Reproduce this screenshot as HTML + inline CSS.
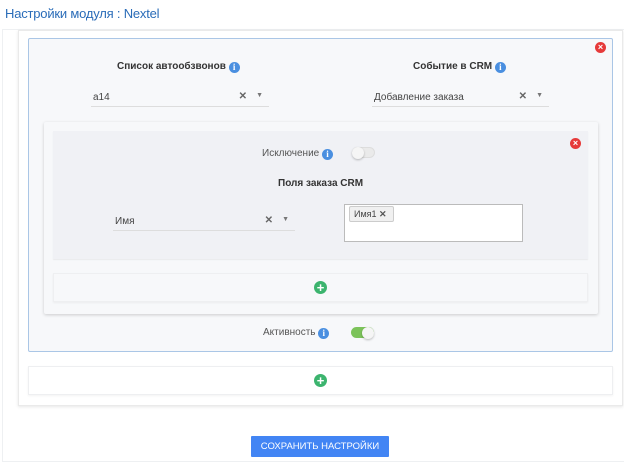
<!DOCTYPE html>
<html><head><meta charset="utf-8"><style>
*{box-sizing:border-box;margin:0;padding:0}
html,body{width:624px;height:463px;overflow:hidden}
body{background:#fff;font-family:"Liberation Sans","Noto Sans CJK SC",sans-serif;position:relative;color:#555}
.a{position:absolute}
.t{left:5px;top:6px;font-size:13px;color:#2a6cb8;letter-spacing:-0.2px}
.outer{left:2px;top:29px;width:640px;height:433px;border:1px solid #eef0f2}
.cont{left:18px;top:30px;width:605px;height:376px;background:#fff;border:1px solid #eaeaea;box-shadow:0 1px 3px rgba(0,0,0,.1)}
.blue{left:28px;top:38px;width:585px;height:314px;background:#f7f8fa;border:1px solid #aac6e6;border-radius:2px}
.lbl{font-size:10px;font-weight:bold;color:#333;white-space:nowrap}
.info{display:inline-block;width:11px;height:11px;border-radius:50%;background:#4a8fe0;color:#fff;font-size:9px;font-weight:bold;text-align:center;line-height:11px;vertical-align:-1px;font-family:"Liberation Serif",serif}
.sel{height:16px;border-bottom:1px solid #ddd;font-size:10px;color:#444;padding-left:2px}
.sel .x{position:absolute;right:22px;top:0;font-size:10px;color:#666;font-weight:bold}
.sel .c{position:absolute;right:6px;top:1px;font-size:7px;color:#777}
.redx{width:11px;height:11px;border-radius:50%;background:#e63a3a;color:#fff;font-size:9px;font-weight:bold;line-height:11px;text-align:center}
.card{left:44px;top:122px;width:554px;height:192px;background:#f7f8fa;box-shadow:0 1px 3px rgba(0,0,0,.18);border-radius:2px}
.grey{left:53px;top:131px;width:535px;height:128px;background:#f0f1f5;box-shadow:0 1px 1px rgba(0,0,0,.06)}
.addb{background:#f7f8fa;border:1px solid #eeeff1;box-shadow:0 1px 2px rgba(0,0,0,.05)}
.plus{width:13px;height:13px;border-radius:50%;background:#3cb46e;color:#fff;font-size:13px;font-weight:bold;line-height:13px;text-align:center}
.tog{width:23px;height:11px;border-radius:6px;background:#eaeaea;border:1px solid #ddd}
.tog i{position:absolute;top:-1px;width:12px;height:12px;border-radius:50%;background:#f5f5f5;box-shadow:0 1px 2px rgba(0,0,0,.25)}
.txt{font-size:10px;color:#555}
</style></head><body>
<div class="a t">Настройки модуля : Nextel</div>
<div class="a outer"></div>
<div class="a cont"></div>
<div class="a blue"></div>
<div class="a redx" style="left:595px;top:42px">×</div>
<div class="a lbl" style="left:117px;top:61px">Список автообзвонов <span class="info">i</span></div>
<div class="a lbl" style="left:413px;top:61px">Событие в CRM <span class="info">i</span></div>
<div class="a sel" style="left:91px;top:91px;width:178px;padding-top:1px">a14<span class="x">✕</span><span class="c">▼</span></div>
<div class="a sel" style="left:372px;top:91px;width:177px;padding-top:1px">Добавление заказа<span class="x">✕</span><span class="c">▼</span></div>
<div class="a card"></div>
<div class="a grey"></div>
<div class="a redx" style="left:570px;top:138px">×</div>
<div class="a txt" style="left:262px;top:148px">Исключение <span class="info">i</span></div>
<div class="a tog" style="left:352px;top:147px"><i style="left:-1px"></i></div>
<div class="a lbl" style="left:278px;top:178px">Поля заказа CRM</div>
<div class="a sel" style="left:113px;top:215px;width:182px;padding-top:1px">Имя<span class="x">✕</span><span class="c">▼</span></div>
<div class="a" style="left:344px;top:204px;width:179px;height:38px;background:#fff;border:1px solid #bbb"></div>
<div class="a" style="left:349px;top:206px;width:45px;height:16px;background:#f0f0f0;border:1px solid #ccc;border-radius:2px;font-size:9px;color:#444;padding:2px 0 0 4px">Имя1 <b style="font-size:9px;color:#555">✕</b></div>
<div class="a addb" style="left:53px;top:273px;width:535px;height:29px"></div>
<div class="a plus" style="left:314px;top:281px">+</div>
<div class="a txt" style="left:263px;top:327px">Активность <span class="info">i</span></div>
<div class="a tog" style="left:351px;top:327px;background:#7cc35a;border-color:#7cc35a"><i style="left:10px"></i></div>
<div class="a addb" style="left:28px;top:366px;width:585px;height:29px;background:#fff"></div>
<div class="a plus" style="left:314px;top:374px">+</div>
<div class="a" style="left:251px;top:436px;width:138px;height:21px;background:#4285f4;color:#fff;font-size:9.5px;text-align:center;line-height:21px;border-radius:1px">СОХРАНИТЬ НАСТРОЙКИ</div>
</body></html>
